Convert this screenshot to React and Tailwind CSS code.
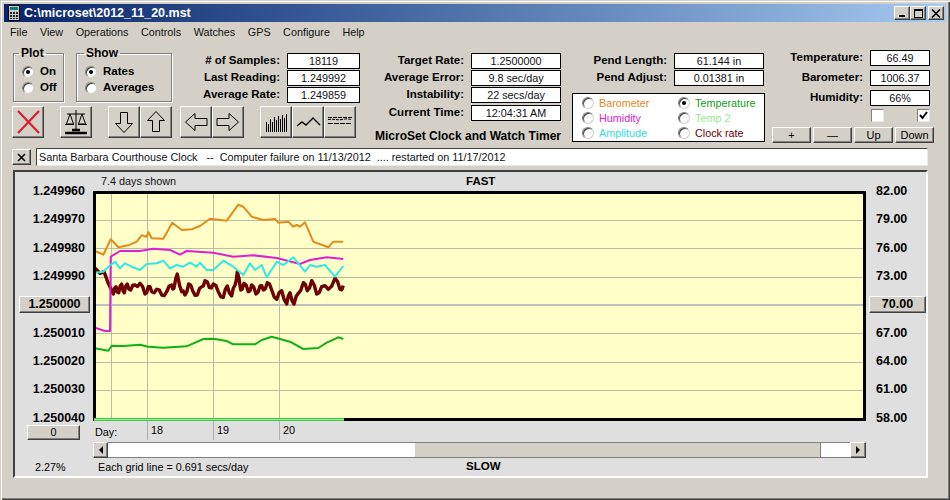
const raised = "border border-t-white border-l-white border-r-[#404040] border-b-[#404040] shadow-[inset_-1px_-1px_0_#808080] bg-[#d4d0c8] flex items-center justify-center";
const zoomA = (pts) => pts.map(([x, y]) => `${(x / 3).toFixed(1)},${(170 + y / 3).toFixed(1)}`).join(" ");
const zoomB = (pts) => pts.map(([x, y]) => `${(90 + x / 3).toFixed(1)},${(320 + y / 3).toFixed(1)}`).join(" ");

const orange = [[285,243],[310,254],[332,208],[355,232],[385,226],[410,215],[425,196],[440,200],[445,186],[455,205],[490,206],[517,158],[545,180],[575,178],[600,168],[630,146],[680,152],[715,104],[730,110],[755,140],[790,150],[825,147],[835,158],[865,155],[880,170],[890,165],[900,170],[915,157],[940,215],[985,232],[1000,215],[1030,215]];
const magenta = [[285,473],[315,483],[330,483],[332,260],[360,243],[420,243],[460,236],[510,240],[540,254],[560,243],[640,248],[700,260],[760,256],[830,264],[900,282],[930,270],[980,262],[1030,267]];
const cyan = [[285,308],[310,305],[325,290],[345,275],[360,295],[375,280],[395,290],[420,300],[440,282],[470,280],[490,272],[510,295],[530,285],[550,290],[570,278],[590,290],[600,278],[620,300],[640,300],[670,272],[700,290],[730,315],[750,280],[765,300],[785,285],[800,322],[830,275],[850,285],[880,262],[915,305],[930,285],[950,290],[975,285],[1005,320],[1030,288]];
const darkBase = [[285,295],[300,310],[312,305],[325,340],[340,372],[348,350],[356,368],[365,342],[373,368],[382,342],[392,360],[405,345],[420,340],[435,372],[445,350],[455,365],[470,358],[485,375],[500,365],[515,345],[522,355],[532,312],[545,365],[555,375],[566,342],[578,362],[592,375],[605,350],[615,332],[628,352],[640,342],[655,365],[670,382],[682,348],[695,378],[705,345],[712,305],[722,360],[732,340],[745,365],[755,345],[768,372],[780,348],[790,360],[802,338],[815,360],[830,388],[845,362],[860,402],[870,368],[882,402],[895,370],[910,338],[922,362],[935,332],[950,372],[965,350],[985,358],[1005,325],[1020,358],[1030,347]];
const dark = darkBase.flatMap((p, i) => {
  const n = darkBase[i + 1];
  if (!n || i < 4) return [p];
  return [p, [(p[0] + n[0]) / 2, (p[1] + n[1]) / 2 + (i % 2 ? 7 : -7)]];
});
const green = [[15,85],[55,92],[65,77],[100,78],[150,74],[175,80],[220,83],[290,79],[340,57],[370,56],[410,63],[430,73],[495,73],[515,60],[545,50],[600,65],[640,87],[685,84],[710,68],[745,52],[760,57]];

function Radio({ on }) {
  return (
    <span className="w-[12px] h-[12px] shrink-0 rounded-full bg-white border border-t-[#808080] border-l-[#808080] border-r-[#d4d0c8] border-b-[#d4d0c8] shadow-[inset_1px_1px_0_#404040] flex items-center justify-center">
      {on && <span className="w-[4px] h-[4px] rounded-full bg-black" />}
    </span>
  );
}

function Field({ label, value, w, h = "h-[16px]" }) {
  return (
    <div className={`flex items-center justify-end ${h}`}>
      <span className="font-bold text-[11.5px] mr-[7px] whitespace-nowrap">{label}</span>
      <span className={`${w} h-full bg-white border border-black flex items-center justify-center text-[10.8px] text-[#111]`}>{value}</span>
    </div>
  );
}

function Group({ title, w, legend, children }) {
  return (
    <fieldset className={`${w} h-[56px] border border-[#808080] shadow-[1px_1px_0_#fff,inset_1px_1px_0_#fff] pl-[8px]`}>
      <legend className={`${legend} px-[2px] font-bold text-[12px] leading-[14px]`}>{title}</legend>
      <div className="flex flex-col gap-[3px] pt-[5px]">{children}</div>
    </fieldset>
  );
}

function RadioRow({ on, label, bold, color }) {
  return (
    <div className={`flex items-center h-[13px] whitespace-nowrap ${bold ? "gap-[6px] font-bold text-[11.5px]" : "gap-[5px] text-[10.8px]"} ${color || ""}`}>
      <Radio on={on} />
      <span>{label}</span>
    </div>
  );
}

function Tool({ children, className = "w-[32px]" }) {
  return <div className={`${raised} ${className} h-[32px]`}>{children}</div>;
}

function ArrowIcon({ points }) {
  return (
    <svg width="26" height="26" viewBox="0 0 26 26">
      <polygon points={points} fill="#d4d0c8" stroke="#000" strokeWidth="1" />
    </svg>
  );
}

function Row({ v }) {
  return <div className="h-[28.33px] flex items-center justify-end">{v}</div>;
}

export default function App() {
  return (
    <div className="w-[950px] h-[500px] overflow-hidden bg-[#d4d0c8] text-black [font-family:Liberation_Sans,Arial,sans-serif] flex flex-col shadow-[inset_1px_1px_0_#d4d0c8,inset_2px_2px_0_#fff,inset_-1px_-1px_0_#404040,inset_-2px_-2px_0_#808080]">
      {/* Title bar */}
      <div className="mx-[4px] mt-[4px] h-[18px] shrink-0 bg-gradient-to-r from-[#0a246a] to-[#a6caf0] flex items-center">
        <svg width="14" height="16" viewBox="0 0 14 16" className="ml-[3px]">
          <rect x="1.5" y="0.5" width="11" height="15" fill="#c8c8c8" stroke="#000" />
          <rect x="3" y="2" width="8" height="3" fill="#0a7a7a" />
          <g fill="#222">
            <rect x="3" y="7" width="2" height="2" /><rect x="6" y="7" width="2" height="2" /><rect x="9" y="7" width="2" height="2" />
            <rect x="3" y="10" width="2" height="2" /><rect x="6" y="10" width="2" height="2" /><rect x="9" y="10" width="2" height="2" />
            <rect x="3" y="13" width="2" height="1" /><rect x="6" y="13" width="2" height="1" /><rect x="9" y="13" width="2" height="1" />
          </g>
        </svg>
        <span className="ml-[3px] text-white font-bold text-[12.5px]">C:\microset\2012_11_20.mst</span>
        <div className="ml-auto mr-[2px] flex items-center">
          <div className={`${raised} w-[16px] h-[14px]`}><span className="w-[6px] h-[2px] bg-black mt-[6px] -ml-[1px]" /></div>
          <div className={`${raised} w-[16px] h-[14px]`}><span className="w-[9px] h-[9px] border border-black border-t-2" /></div>
          <div className={`${raised} w-[16px] h-[14px] ml-[2px]`}>
            <svg width="10" height="9" viewBox="0 0 10 9"><path d="M1 0.5 L9 8.5 M9 0.5 L1 8.5" stroke="#000" strokeWidth="1.6" /></svg>
          </div>
        </div>
      </div>

      {/* Menu */}
      <div className="h-[20px] shrink-0 pl-[10px] flex items-center gap-[12.5px] text-[10.8px] text-[#111]">
        <span>File</span><span>View</span><span>Operations</span><span>Controls</span><span>Watches</span><span>GPS</span><span>Configure</span><span>Help</span>
      </div>

      {/* Top controls */}
      <div className="h-[106px] shrink-0 flex">
        <div className="w-[360px] shrink-0 pl-[12px] pt-[4px] flex flex-col">
          <div className="flex h-[64px]">
            <div className="pl-[1px]">
              <Group title="Plot" w="w-[51px]" legend="ml-[-3px]">
                <RadioRow on label="On" bold />
                <RadioRow label="Off" bold />
              </Group>
            </div>
            <div className="ml-[12px]">
              <Group title="Show" w="w-[96px]" legend="ml-[-1px]">
                <RadioRow on label="Rates" bold />
                <RadioRow label="Averages" bold />
              </Group>
            </div>
            <div className="flex-1 pt-[7px] flex flex-col gap-[1px]">
              <Field label="# of Samples:" value="18119" w="w-[73px]" />
              <Field label="Last Reading:" value="1.249992" w="w-[73px]" />
              <Field label="Average Rate:" value="1.249859" w="w-[73px]" />
            </div>
          </div>
          <div className="flex mt-[-4px]">
            <Tool>
              <svg width="26" height="26" viewBox="0 0 26 26"><path d="M3 2 L24 24 M24 2 L3 24" stroke="#d8202c" strokeWidth="2.2" /></svg>
            </Tool>
            <Tool className="w-[32px] ml-[16px]">
              <svg width="26" height="26" viewBox="0 0 26 26" fill="none" stroke="#000">
                <path d="M13 1 V21 M4 5 H22" strokeWidth="1" />
                <path d="M7 5 L3.5 15 H10.5 Z M19 5 L15.5 15 H22.5 Z" strokeWidth="1" />
                <path d="M2 15.5 H11 M15 15.5 H24" strokeWidth="1" />
                <path d="M9 21 H17 M2 24 H24" strokeWidth="2.4" />
              </svg>
            </Tool>
            <Tool className="w-[32px] ml-[16px]"><ArrowIcon points="9.5,3.5 16.5,3.5 16.5,14.5 21.5,14.5 13,23.5 4.5,14.5 9.5,14.5" /></Tool>
            <Tool><ArrowIcon points="9.5,22.5 16.5,22.5 16.5,11.5 21.5,11.5 13,2.5 4.5,11.5 9.5,11.5" /></Tool>
            <Tool className="w-[32px] ml-[8px]"><ArrowIcon points="24,9.5 24,16.5 12,16.5 12,21.5 2.5,13 12,4.5 12,9.5" /></Tool>
            <Tool><ArrowIcon points="2,9.5 2,16.5 14,16.5 14,21.5 23.5,13 14,4.5 14,9.5" /></Tool>
            <Tool className="w-[32px] ml-[16px]">
              <svg width="26" height="26" viewBox="0 0 26 26" stroke="#000" strokeWidth="1">
                <path d="M3.5 13 V23 M5.5 15 V23 M7.5 10 V23 M9.5 13 V23 M11.5 8 V23 M13.5 11 V23 M15.5 7 V23 M17.5 10 V23 M19.5 6 V23 M21.5 9 V23 M23.5 5 V23" />
              </svg>
            </Tool>
            <Tool>
              <svg width="26" height="26" viewBox="0 0 26 26" fill="none" stroke="#000" strokeWidth="1.4"><path d="M2 17 L7 13 L11 16 L18 9 L25 16" /></svg>
            </Tool>
            <Tool>
              <svg width="26" height="26" viewBox="0 0 26 26" fill="none" stroke="#000" strokeWidth="1">
                <path d="M1 8.5 H25" strokeDasharray="4 1" />
                <path d="M1 10.5 C6 9.5 10 11.5 15 10.5 S22 10 25 10.5" strokeDasharray="3 1" />
                <path d="M1 14.5 H25" strokeDasharray="5 1" />
              </svg>
            </Tool>
          </div>
        </div>

        <div className="w-[201px] shrink-0 pt-[11px] flex flex-col gap-[1px]">
          <Field label="Target Rate:" value="1.2500000" w="w-[90px]" />
          <Field label="Average Error:" value="9.8 sec/day" w="w-[90px]" />
          <Field label="Instability:" value="22 secs/day" w="w-[90px]" />
          <div className="mt-[1px]"><Field label="Current Time:" value="12:04:31 AM" w="w-[90px]" /></div>
          <div className="mt-[7px] text-right font-bold text-[12px] leading-[14px] whitespace-nowrap">MicroSet Clock and Watch Timer</div>
        </div>

        <div className="w-[203px] shrink-0 pt-[11px] flex flex-col gap-[1px]">
          <Field label="Pend Length:" value="61.144 in" w="w-[90px]" />
          <Field label="Pend Adjust:" value="0.01381 in" w="w-[90px]" />
          <div className="mt-[6px] ml-[11px] w-[193px] h-[49px] bg-white border border-black grid grid-cols-[96px_1fr] grid-rows-3 items-center pl-[9px] pt-[1px]">
            <RadioRow label="Barometer" color="text-[#e8861a]" />
            <RadioRow on label="Temperature" color="text-[#10a010]" />
            <RadioRow label="Humidity" color="text-[#e020d0]" />
            <RadioRow label="Temp 2" color="text-[#96e896]" />
            <RadioRow label="Amplitude" color="text-[#30e0e0]" />
            <RadioRow label="Clock rate" color="text-[#700000]" />
          </div>
        </div>

        <div className="w-[170px] shrink-0 pt-[8px] pl-[8px] flex flex-col">
          <div className="pr-[4px] flex flex-col gap-[4px]">
            <Field label="Temperature:" value="66.49" w="w-[60px]" />
            <Field label="Barometer:" value="1006.37" w="w-[60px]" />
            <Field label="Humidity:" value="66%" w="w-[60px]" />
          </div>
          <div className="flex justify-end gap-[33px] pr-[4px] mt-[3px] h-[13px]">
            <span className="w-[13px] h-[13px] bg-white border border-t-[#808080] border-l-[#808080] border-r-[#e8e8e8] border-b-[#e8e8e8]" />
            <span className="w-[13px] h-[13px] bg-white border border-t-[#808080] border-l-[#808080] border-r-[#e8e8e8] border-b-[#e8e8e8] flex items-center justify-center">
              <svg width="9" height="9" viewBox="0 0 9 9"><path d="M1 4 L3.5 7 L8 1" fill="none" stroke="#000" strokeWidth="2" /></svg>
            </span>
          </div>
          <div className="flex gap-[2px] mt-[5px] text-[11px]">
            <div className={`${raised} w-[39px] h-[16px]`}>+</div>
            <div className={`${raised} w-[39px] h-[16px]`}>—</div>
            <div className={`${raised} w-[39px] h-[16px]`}>Up</div>
            <div className={`${raised} w-[39px] h-[16px]`}>Down</div>
          </div>
        </div>
      </div>

      {/* Note row */}
      <div className="h-[18px] shrink-0 pl-[12px] flex items-center">
        <div className={`${raised} w-[19px] h-[16px]`}>
          <svg width="9" height="9" viewBox="0 0 9 9"><path d="M1 1 L8 8 M8 1 L1 8" stroke="#000" strokeWidth="1.6" /></svg>
        </div>
        <div className="ml-[5px] w-[892px] h-[18px] bg-white border border-t-[#404040] border-l-[#404040] border-r-[#e8e8e8] border-b-[#e8e8e8] flex items-center pl-[2px] text-[10.8px] whitespace-pre text-[#111]">
          Santa Barbara Courthouse Clock   --  Computer failure on 11/13/2012  .... restarted on 11/17/2012
        </div>
      </div>

      {/* Chart panel */}
      <div className="mt-[4px] ml-[13px] w-[915px] h-[308px] shrink-0 bg-[#dfdfdf] border-2 border-t-[#404040] border-l-[#404040] border-r-white border-b-white grid grid-cols-[78px_773px_60px] grid-rows-[19px_230px_21px_16px_18px] text-[10.8px]">
        <div />
        <div className="flex items-center">
          <span className="pl-[8px] w-[373px] text-[#111]">7.4 days shown</span>
          <span className="font-bold text-[11.5px]">FAST</span>
        </div>
        <div />

        <div className="-mt-[14px] h-[255px] pr-[8px] font-bold text-[12.5px] leading-none flex flex-col relative z-10">
          <Row v="1.249960" /><Row v="1.249970" /><Row v="1.249980" /><Row v="1.249990" />
          <div className="h-[28.33px] flex items-center justify-end">
            <div className={`${raised} w-[71px] h-[17px] -mr-[5px]`}>1.250000</div>
          </div>
          <Row v="1.250010" /><Row v="1.250020" /><Row v="1.250030" /><Row v="1.250040" />
        </div>

        <svg width="773" height="230" viewBox="93 191 773 230" className="block">
          <rect x="93" y="191" width="773" height="230" fill="#ffffc8" />
          <g stroke="#bcbca4" strokeWidth="1">
            <path d="M94 220.5 H864 M94 248.5 H864 M94 277.5 H864 M94 333.5 H864 M94 362.5 H864 M94 390.5 H864" />
            <path d="M111.5 192 V420 M147.5 192 V420 M213.5 192 V420 M279.5 192 V420" />
          </g>
          <path d="M94 305 H864" stroke="#c0c0c0" strokeWidth="2" />
          <g fill="none" strokeLinejoin="round">
            <polyline points={zoomA(dark)} stroke="#6e0000" strokeWidth="3.4" />
            <polyline points={zoomA(magenta)} stroke="#e020d0" strokeWidth="2" />
            <polyline points={zoomA(orange)} stroke="#e88a1a" strokeWidth="2" />
            <polyline points={zoomB(green)} stroke="#10b018" strokeWidth="2" />
            <polyline points={zoomA(cyan)} stroke="#30e8e8" strokeWidth="2" />
          </g>
          <rect x="94.5" y="192.5" width="770" height="227" fill="none" stroke="#000" strokeWidth="3" />
          <path d="M94 419.5 H344" stroke="#70ff70" strokeWidth="2.4" />
        </svg>

        <div className="-mt-[14px] h-[255px] font-bold text-[12.5px] leading-none flex flex-col relative z-10">
          {["82.00", "79.00", "76.00", "73.00"].map((v) => (
            <div key={v} className="h-[28.33px] flex items-center pl-[10px]">{v}</div>
          ))}
          <div className="h-[28.33px] flex items-center pl-[3px]">
            <div className={`${raised} w-[57px] h-[17px]`}>70.00</div>
          </div>
          {["67.00", "64.00", "61.00", "58.00"].map((v) => (
            <div key={v} className="h-[28.33px] flex items-center pl-[10px]">{v}</div>
          ))}
        </div>

        <div className="pl-[12px] pt-[4px]">
          <div className={`${raised} w-[53px] h-[15px]`}>0</div>
        </div>
        <div className="flex h-[19px]">
          <div className="w-[54px] pl-[2px] pt-[3px]">Day:</div>
          <div className="w-[66px] pl-[3px] pt-[1px] border-l border-[#b0b0b0]">18</div>
          <div className="w-[66px] pl-[3px] pt-[1px] border-l border-[#b0b0b0]">19</div>
          <div className="w-[66px] pl-[3px] pt-[1px] border-l border-[#b0b0b0]">20</div>
        </div>
        <div />

        <div />
        <div className="flex h-[16px]">
          <div className={`${raised} w-[15px] h-[16px]`}><span className="w-0 h-0 border-y-[4px] border-y-transparent border-r-[4px] border-r-black" /></div>
          <div className="w-[307px] bg-white border-y border-[#808080]" />
          <div className="w-[405px] bg-[#d4d0c8] border-y border-[#808080]" />
          <div className="w-[30px] bg-white border-y border-l border-[#808080]" />
          <div className={`${raised} w-[16px] h-[16px]`}><span className="w-0 h-0 border-y-[4px] border-y-transparent border-l-[4px] border-l-black" /></div>
        </div>
        <div />

        <div className="pl-[20px] flex items-center">2.27%</div>
        <div className="flex items-center">
          <span className="pl-[5px] w-[373px]">Each grid line = 0.691 secs/day</span>
          <span className="font-bold text-[11.5px]">SLOW</span>
        </div>
        <div />
      </div>
    </div>
  );
}
